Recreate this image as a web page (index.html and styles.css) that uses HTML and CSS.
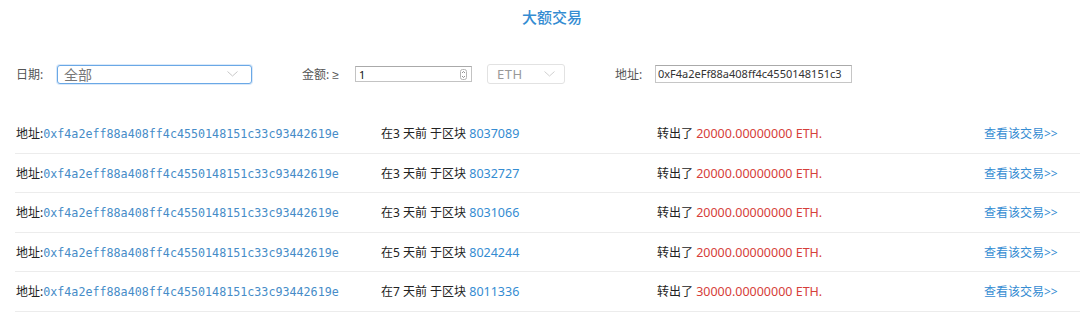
FILE: index.html
```html
<!DOCTYPE html>
<html lang="zh-CN">
<head>
    <meta charset="UTF-8">
    <title>大额交易</title>
    <link rel="stylesheet" href="styles.css">
</head>
<body>
<div class="page">
    <h1 class="title">大额交易</h1>

    <div class="filters">
        <label class="filter-label label-date">日期:</label>
        <div class="select select-date">
            <span class="select-value">全部</span>
            <svg class="chevron" width="11" height="6" viewBox="0 0 11 6"><path d="M0.5 0.5 L5.5 5 L10.5 0.5" fill="none" stroke="#c8c8c8" stroke-width="1"/></svg>
        </div>

        <label class="filter-label label-amount">金额: <span class="gte">≥</span></label>
        <div class="number-input">
            <span class="number-value">1</span>
            <svg class="spinner" width="7" height="11" viewBox="0 0 7 11">
                <rect x="0.5" y="0.5" width="6" height="10" rx="2" fill="#fff" stroke="#b5b5b5"/>
                <path d="M2 4 L3.5 2.5 L5 4" fill="none" stroke="#777" stroke-width="0.8"/>
                <path d="M2 7 L3.5 8.5 L5 7" fill="none" stroke="#777" stroke-width="0.8"/>
            </svg>
        </div>
        <div class="select select-unit">
            <span class="select-value unit-value">ETH</span>
            <svg class="chevron" width="11" height="6" viewBox="0 0 11 6"><path d="M0.5 0.5 L5.5 5 L10.5 0.5" fill="none" stroke="#d0d0d0" stroke-width="1"/></svg>
        </div>

        <label class="filter-label label-address">地址:</label>
        <div class="text-input">0xF4a2eFf88a408ff4c4550148151c3</div>
    </div>

    <ul class="tx-list">
        <li class="tx-row">
            <span class="tx-cell">地址:<a class="hash" href="#">0xf4a2eff88a408ff4c4550148151c33c93442619e</a></span>
            <span class="tx-cell">在3 天前 于区块 <a class="num" href="#">8037089</a></span>
            <span class="tx-cell">转出了 <span class="amount">20000.00000000 ETH.</span></span>
            <span class="tx-cell"><a class="view-link" href="#">查看该交易&gt;&gt;</a></span>
        </li>
        <li class="tx-row">
            <span class="tx-cell">地址:<a class="hash" href="#">0xf4a2eff88a408ff4c4550148151c33c93442619e</a></span>
            <span class="tx-cell">在3 天前 于区块 <a class="num" href="#">8032727</a></span>
            <span class="tx-cell">转出了 <span class="amount">20000.00000000 ETH.</span></span>
            <span class="tx-cell"><a class="view-link" href="#">查看该交易&gt;&gt;</a></span>
        </li>
        <li class="tx-row">
            <span class="tx-cell">地址:<a class="hash" href="#">0xf4a2eff88a408ff4c4550148151c33c93442619e</a></span>
            <span class="tx-cell">在3 天前 于区块 <a class="num" href="#">8031066</a></span>
            <span class="tx-cell">转出了 <span class="amount">20000.00000000 ETH.</span></span>
            <span class="tx-cell"><a class="view-link" href="#">查看该交易&gt;&gt;</a></span>
        </li>
        <li class="tx-row">
            <span class="tx-cell">地址:<a class="hash" href="#">0xf4a2eff88a408ff4c4550148151c33c93442619e</a></span>
            <span class="tx-cell">在5 天前 于区块 <a class="num" href="#">8024244</a></span>
            <span class="tx-cell">转出了 <span class="amount">20000.00000000 ETH.</span></span>
            <span class="tx-cell"><a class="view-link" href="#">查看该交易&gt;&gt;</a></span>
        </li>
        <li class="tx-row">
            <span class="tx-cell">地址:<a class="hash" href="#">0xf4a2eff88a408ff4c4550148151c33c93442619e</a></span>
            <span class="tx-cell">在7 天前 于区块 <a class="num" href="#">8011336</a></span>
            <span class="tx-cell">转出了 <span class="amount">30000.00000000 ETH.</span></span>
            <span class="tx-cell"><a class="view-link" href="#">查看该交易&gt;&gt;</a></span>
        </li>
    </ul>
</div>
</body>
</html>
```

FILE: styles.css
```css
:root {
    --theme-blue: rgb(52, 140, 210);
    --theme-red: rgb(214, 64, 58);
}
* {
    box-sizing: border-box;
}
body {
    margin: 0;
    background: #fff;
    font-family: "Noto Sans", "Noto Sans CJK SC", sans-serif;
    font-size: 12px;
    color: #222;
}
a {
    text-decoration: none;
    color: var(--theme-blue);
}
.page {
    width: 1080px;
}
.title {
    margin: 0;
    padding: 5px 0 0 24px;
    height: 34px;
    text-align: center;
    font-size: 15px;
    font-weight: 500;
    line-height: 24px;
    color: var(--theme-blue);
}

/* filter bar */
.filters {
    display: flex;
    align-items: center;
    height: 80px;
    padding: 0 0 0 16px;
}
.filter-label {
    color: #555;
    font-size: 12px;
}
.gte {
    font-family: "Liberation Sans", sans-serif;
}
.label-date {
    width: 41px;
}
.label-amount {
    margin-left: 50px;
    width: 53px;
}
.label-address {
    margin-left: 50px;
    width: 40px;
}
.select {
    display: flex;
    align-items: center;
    justify-content: space-between;
    background: #fff;
    border-radius: 3px;
}
.select-date {
    width: 195px;
    height: 19px;
    padding: 0 13px 0 6px;
    border: 1px solid #6aa8e6;
    box-shadow: 0 0 0 1px rgba(106, 168, 230, 0.25);
}
.select-value {
    font-size: 14px;
    color: #777;
    line-height: 17px;
}
.select-unit {
    width: 78px;
    height: 20px;
    margin-left: 15px;
    padding: 0 9px 0 9px;
    border: 1px solid #e2e2e2;
}
.unit-value {
    font-size: 13px;
    color: #999;
    letter-spacing: 0.5px;
}
.number-input {
    display: flex;
    align-items: center;
    justify-content: space-between;
    width: 117px;
    height: 16px;
    padding: 0 4px 0 3px;
    border: 1px solid #c3c3c3;
    border-top-color: #aaa;
}
.number-value {
    font-size: 11px;
    color: #111;
}
.text-input {
    width: 197px;
    height: 18px;
    padding: 0 2px;
    border: 1px solid #c6c6c6;
    border-top-color: #aaa;
    font-size: 11px;
    line-height: 16px;
    color: #333;
    white-space: nowrap;
    overflow: hidden;
}

/* transactions */
.tx-list {
    list-style: none;
    margin: 0;
    padding: 0 0 0 15px;
}
.tx-row {
    display: grid;
    grid-template-columns: 365px 276px 327px 1fr;
    align-items: center;
    height: 39.5px;
    padding-left: 1px;
    border-bottom: 1px solid #ececec;
}
.tx-cell {
    white-space: nowrap;
    color: #222;
}
.hash {
    font-family: "DejaVu Sans Mono", monospace;
    font-size: 11.7px;
    color: rgb(70, 140, 200);
}
.num {
    color: var(--theme-blue);
    font-size: 12.5px;
}
.amount {
    color: var(--theme-red);
    font-size: 12.5px;
}
.view-link {
    color: var(--theme-blue);
}
```
